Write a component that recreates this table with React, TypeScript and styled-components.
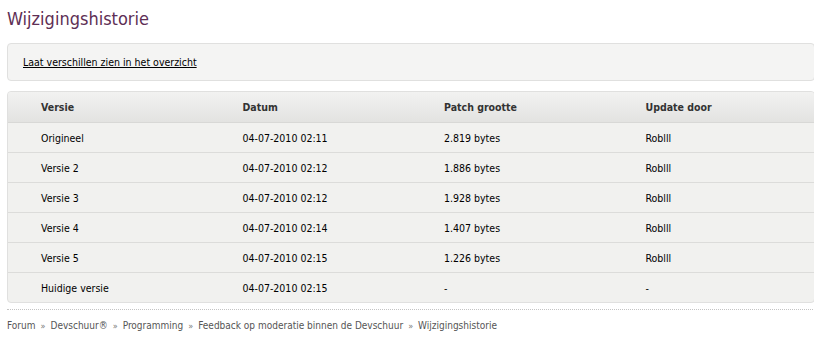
import React from 'react';
import styled, { createGlobalStyle } from 'styled-components';

const GlobalStyle = createGlobalStyle`
  html, body {
    margin: 0;
    padding: 0;
    background: #ffffff;
    overflow-x: hidden;
  }
  body {
    font-family: "DejaVu Sans Condensed", "DejaVu Sans", sans-serif;
    font-size: 10.5px;
    color: #000;
  }
`;

const Page = styled.div`
  padding: 7px 0 0 7px;
  width: 808px;
`;

const Title = styled.h1`
  margin: 0 0 12px 0;
  font-family: "DejaVu Sans Condensed", "DejaVu Sans", sans-serif;
  font-size: 18px;
  font-weight: normal;
  color: #5e2f55;
  line-height: 24px;
`;

const Panel = styled.div`
  background: #f4f4f3;
  border: 1px solid #e0e0df;
  border-radius: 4px;
  padding: 11px 15px;
  line-height: 14px;
  margin-bottom: 10px;
`;

const PlainLink = styled.a`
  color: #000;
  text-decoration: underline;
  cursor: pointer;
`;

const TableBox = styled.div`
  border: 1px solid #e0e0df;
  border-radius: 4px;
  overflow: hidden;
  background: #f1f1ef;
`;

const Table = styled.table`
  width: 100%;
  border-collapse: collapse;
  table-layout: fixed;
`;

const HeadCell = styled.th`
  text-align: left;
  font-weight: bold;
  color: #333;
  height: 30px;
  padding: 0 0 0 33px;
  background: linear-gradient(#f2f2f1, #e3e3e1);
  border-bottom: 1px solid #d8d8d6;
`;

const Cell = styled.td`
  height: 29px;
  padding: 0 0 0 33px;
  border-bottom: 1px solid #dcdcda;
  color: #000;
`;

const Row = styled.tr`
  &:last-child td {
    border-bottom: none;
  }
`;

const Divider = styled.div`
  margin-top: 6px;
  border-top: 1px dotted #c4c4c4;
`;

const Crumbs = styled.div`
  padding-top: 10px;
  font-size: 10px;
  color: #555;
  display: flex;
  gap: 5px;
  align-items: center;
`;

const Sep = styled.span`
  font-size: 9px;
  color: #777;
`;

const rows = [
  ['Origineel', '04-07-2010 02:11', '2.819 bytes', 'Roblll'],
  ['Versie 2', '04-07-2010 02:12', '1.886 bytes', 'Roblll'],
  ['Versie 3', '04-07-2010 02:12', '1.928 bytes', 'Roblll'],
  ['Versie 4', '04-07-2010 02:14', '1.407 bytes', 'Roblll'],
  ['Versie 5', '04-07-2010 02:15', '1.226 bytes', 'Roblll'],
  ['Huidige versie', '04-07-2010 02:15', '-', '-'],
];

const crumbs = ['Forum', 'Devschuur®', 'Programming', 'Feedback op moderatie binnen de Devschuur', 'Wijzigingshistorie'];

export default function App() {
  return (
    <>
      <GlobalStyle />
      <Page>
        <Title>Wijzigingshistorie</Title>
        <Panel>
          <PlainLink>Laat verschillen zien in het overzicht</PlainLink>
        </Panel>
        <TableBox>
          <Table>
            <thead>
              <tr>
                <HeadCell>Versie</HeadCell>
                <HeadCell>Datum</HeadCell>
                <HeadCell>Patch grootte</HeadCell>
                <HeadCell>Update door</HeadCell>
              </tr>
            </thead>
            <tbody>
              {rows.map((r) => (
                <Row key={r[0]}>
                  {r.map((c, i) => (
                    <Cell key={i}>{c}</Cell>
                  ))}
                </Row>
              ))}
            </tbody>
          </Table>
        </TableBox>
        <Divider />
        <Crumbs>
          {crumbs.map((c, i) => (
            <React.Fragment key={c}>
              {i > 0 && <Sep>»</Sep>}
              <span>{c}</span>
            </React.Fragment>
          ))}
        </Crumbs>
      </Page>
    </>
  );
}
